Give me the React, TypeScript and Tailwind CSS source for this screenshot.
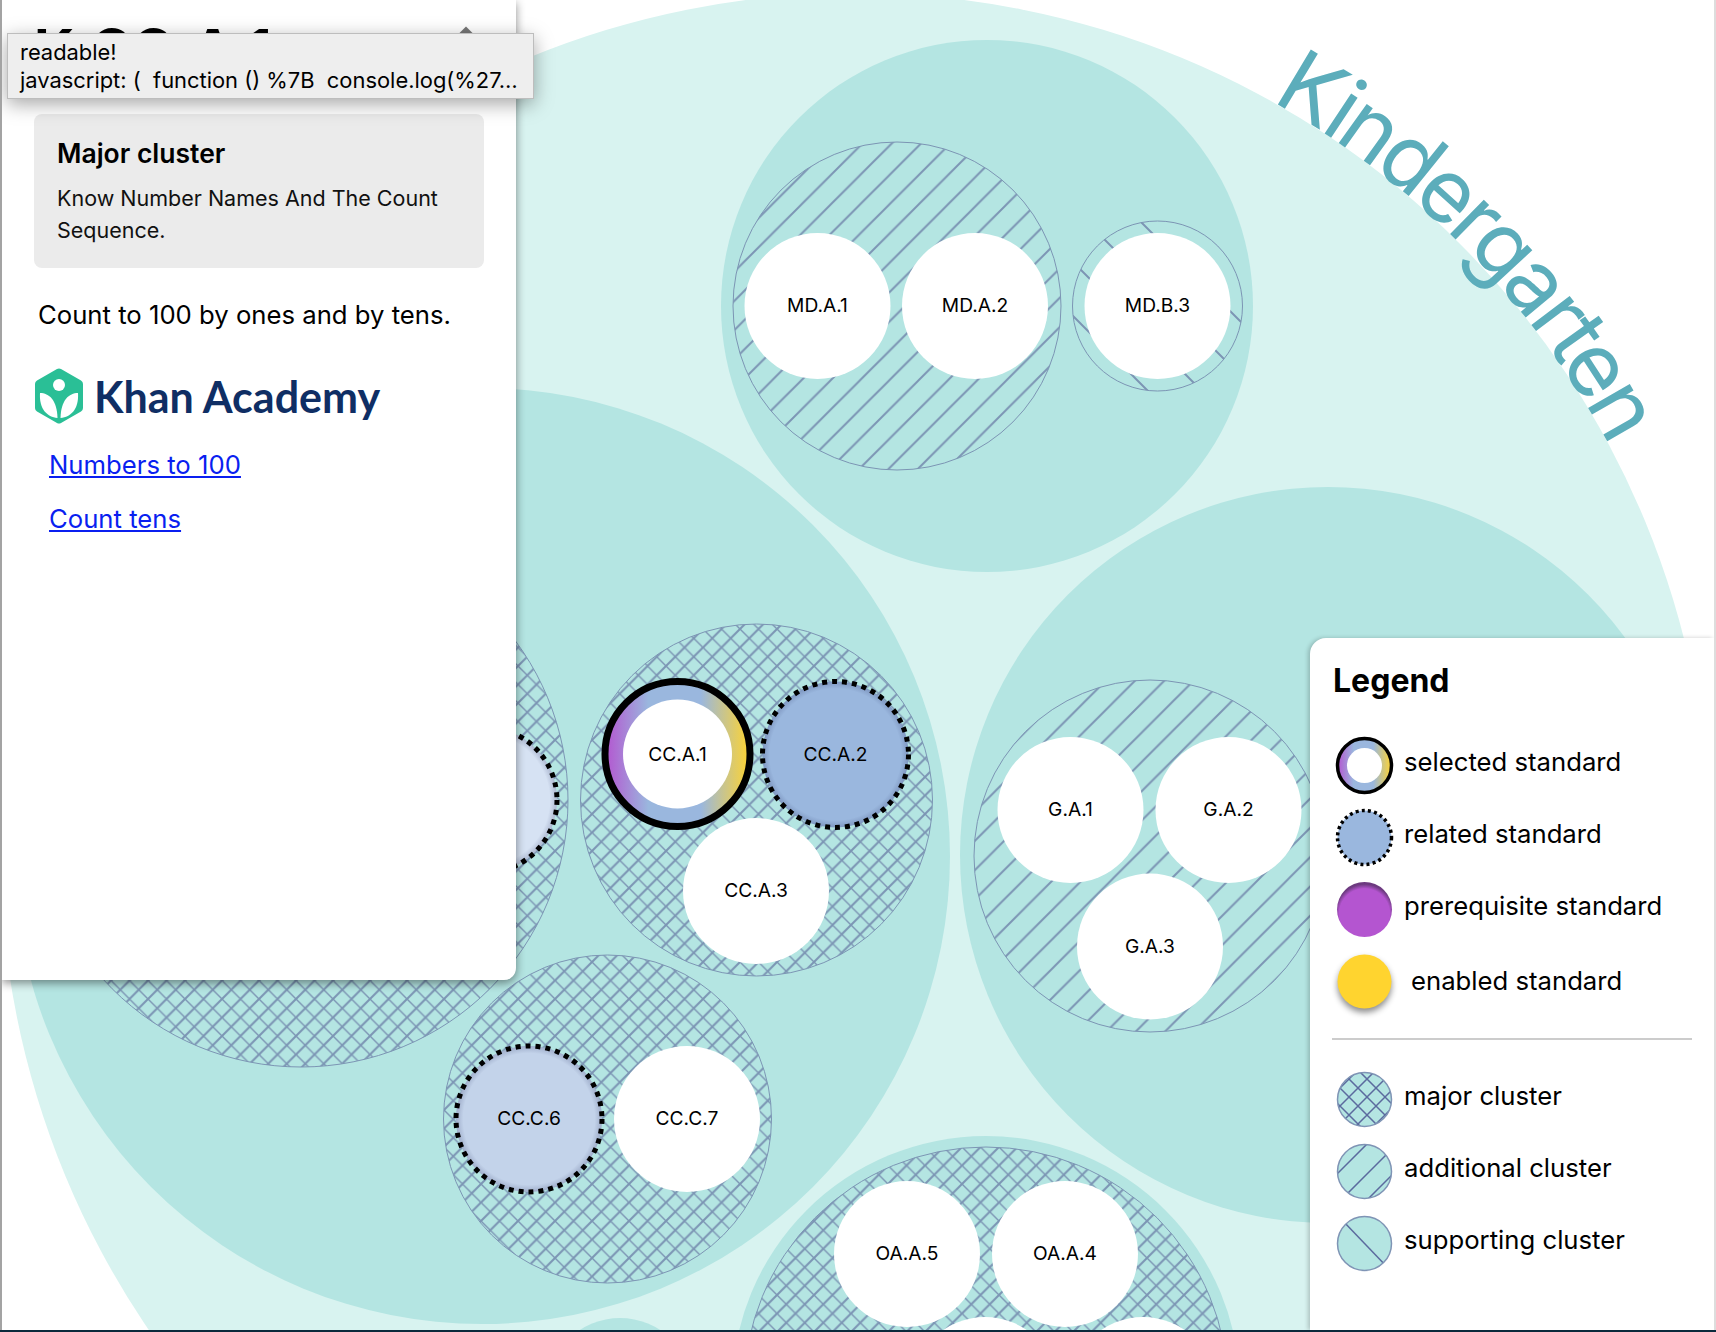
import React from 'react';

const LIGHT = '#d8f3f0';
const MEDIUM = '#b4e5e2';
const HATCH = '#7c95b4';
const PURPLE = '#b455d0';
const BLUE = '#9ab7de';
const YELLOW = '#ffd42f';

const slash = (p: number) => `M0 ${p}L${p} 0M-2 2L2 -2M${p - 2} ${p + 2}L${p + 2} ${p - 2}`;
const backslash = (p: number) => `M0 0L${p} ${p}M-2 ${p - 2}L2 ${p + 2}M${p - 2} -2L${p + 2} 2`;

const groups = [
  { cx: 987, cy: 306, r: 266 },
  { cx: 482, cy: 856, r: 468 },
  { cx: 1328, cy: 855, r: 368 },
  { cx: 986, cy: 1390, r: 254 },
  { cx: 620, cy: 1391, r: 73 },
];

const clusters = [
  { cx: 897, cy: 306, r: 164, fill: 'url(#add-md)' },
  { cx: 1157.5, cy: 306, r: 85, fill: 'url(#sup)' },
  { cx: 756.5, cy: 800, r: 176, fill: 'url(#major)' },
  { cx: 301, cy: 800, r: 267, fill: 'url(#major)' },
  { cx: 607.5, cy: 1119, r: 164, fill: 'url(#major)' },
  { cx: 1150, cy: 856, r: 176, fill: 'url(#add-g)' },
  { cx: 986, cy: 1389, r: 242, fill: 'url(#major)' },
];

const standards = [
  { id: 'MD.A.1', cx: 817.5, cy: 306 },
  { id: 'MD.A.2', cx: 975, cy: 306 },
  { id: 'MD.B.3', cx: 1157.5, cy: 306 },
  { id: 'CC.A.3', cx: 756, cy: 891 },
  { id: 'CC.C.7', cx: 687, cy: 1119 },
  { id: 'G.A.1', cx: 1070.500, cy: 810 },
  { id: 'G.A.2', cx: 1228.500, cy: 810 },
  { id: 'G.A.3', cx: 1150, cy: 946.500 },
  { id: 'OA.A.5', cx: 907, cy: 1254 },
  { id: 'OA.A.4', cx: 1065, cy: 1254 },
  { id: '', cx: 985, cy: 1390 },
  { id: '', cx: 1143, cy: 1390 },
];

const related = [
  { id: '', cx: 484, cy: 800, fill: '#d6e2f3' },
  { id: 'CC.A.2', cx: 835.5, cy: 754.5, fill: BLUE },
  { id: 'CC.C.6', cx: 529, cy: 1119, fill: '#c3d3ea' },
];

const Label = ({ x, y, children }: { x: number; y: number; children: React.ReactNode }) => (
  <text x={x} y={y - 1} textAnchor="middle" dominantBaseline="central" fill="#000" className="text-[19.2px]">
    {children}
  </text>
);

const Pack = () => (
  <svg width={1716} height={1332} className="absolute inset-0">
    <defs>
      <pattern id="add-md" width={29.3} height={29.3} patternUnits="userSpaceOnUse" patternTransform="translate(9.7 0)">
        <path d={slash(29.3)} stroke={HATCH} strokeWidth={2} />
      </pattern>
      <pattern id="add-g" width={29.3} height={29.3} patternUnits="userSpaceOnUse" patternTransform="translate(28.4 0)">
        <path d={slash(29.3)} stroke={HATCH} strokeWidth={2} />
      </pattern>
      <pattern id="sup" width={54} height={54} patternUnits="userSpaceOnUse" patternTransform="translate(1 0)">
        <path d={backslash(54)} stroke={HATCH} strokeWidth={2} />
      </pattern>
      <pattern id="major" width={18.5} height={18.5} patternUnits="userSpaceOnUse">
        <path d={backslash(18.5)} stroke={HATCH} strokeWidth={1.4} />
        <path d={slash(18.5)} stroke={HATCH} strokeWidth={2.1} />
      </pattern>
      <linearGradient id="selected">
        <stop offset="0%" stopColor={PURPLE} />
        <stop offset="30%" stopColor={BLUE} />
        <stop offset="66%" stopColor={BLUE} />
        <stop offset="100%" stopColor={YELLOW} />
      </linearGradient>
      <radialGradient id="inset">
        <stop offset="90%" stopColor="#1e285a" stopOpacity={0} />
        <stop offset="100%" stopColor="#1e285a" stopOpacity={0.22} />
      </radialGradient>
      <path id="edge" d="M1271 101 A855 855 0 0 1 1710 848" />
    </defs>

    <circle cx={855} cy={848} r={855} fill={LIGHT} />
    <text fill="#5cadbb" letterSpacing="-4.4" className="text-[88px] font-normal">
      <textPath href="#edge">Kindergarten</textPath>
    </text>

    {groups.map((g) => (
      <circle key={`${g.cx}-${g.cy}`} cx={g.cx} cy={g.cy} r={g.r} fill={MEDIUM} />
    ))}
    {clusters.map((c) => (
      <circle key={`${c.cx}-${c.cy}`} cx={c.cx} cy={c.cy} r={c.r} fill={c.fill} stroke={HATCH} strokeWidth={1} />
    ))}

    {standards.map((s) => (
      <g key={`${s.cx}-${s.cy}`}>
        <circle cx={s.cx} cy={s.cy} r={73} fill="#fff" />
        {s.id && <Label x={s.cx} y={s.cy}>{s.id}</Label>}
      </g>
    ))}

    {related.map((s) => (
      <g key={`${s.cx}-${s.cy}`}>
        <circle cx={s.cx} cy={s.cy} r={73} fill={s.fill} />
        <circle cx={s.cx} cy={s.cy} r={73} fill="url(#inset)" />
        <circle cx={s.cx} cy={s.cy} r={73} fill="none" stroke="#000" strokeWidth={5} strokeDasharray="5 5" />
        {s.id && <Label x={s.cx} y={s.cy}>{s.id}</Label>}
      </g>
    ))}

    <circle cx={677.5} cy={754} r={72.5} fill="url(#selected)" stroke="#000" strokeWidth={7} />
    <circle cx={677.5} cy={754} r={54.5} fill="#fff" />
    <Label x={677.5} y={755}>CC.A.1</Label>
  </svg>
);

const Swatch = ({ children, className }: { children: React.ReactNode; className?: string }) => (
  <svg width={55} height={55} viewBox="0 0 55 55" className={`shrink-0 overflow-visible ${className ?? ''}`}>
    {children}
  </svg>
);

const ClusterSwatch = ({ id, lines }: { id: string; lines: string }) => (
  <Swatch>
    <clipPath id={id}>
      <circle cx={27.5} cy={27.5} r={27} />
    </clipPath>
    <circle cx={27.5} cy={27.5} r={27} fill={MEDIUM} />
    <path d={lines} clipPath={`url(#${id})`} stroke="#5b6a9e" strokeWidth={1.5} fill="none" />
    <circle cx={27.5} cy={27.5} r={27} fill="none" stroke="#7f94b5" strokeWidth={1.5} />
  </Swatch>
);

const majorLines = [-54, -36, -18, 0, 18, 36, 54, 72, 90, 108]
  .map((n) => `M${n} -5L${n + 60} 55M${n} 55L${n + 60} -5`)
  .join('');

const legendRows = [
  {
    label: 'selected standard',
    swatch: (
      <Swatch>
        <linearGradient id="legend-selected">
          <stop offset="0%" stopColor={PURPLE} />
          <stop offset="30%" stopColor={BLUE} />
          <stop offset="66%" stopColor={BLUE} />
          <stop offset="100%" stopColor={YELLOW} />
        </linearGradient>
        <circle cx={27.5} cy={27.5} r={27} fill="url(#legend-selected)" stroke="#000" strokeWidth={3.5} />
        <circle cx={27.5} cy={27.5} r={17.5} fill="#fff" />
      </Swatch>
    ),
  },
  {
    label: 'related standard',
    swatch: (
      <Swatch>
        <circle cx={27.5} cy={27.5} r={27} fill={BLUE} stroke="#000" strokeWidth={3.5} strokeDasharray="3 3.2" />
      </Swatch>
    ),
  },
  {
    label: 'prerequisite standard',
    swatch: (
      <Swatch>
        <radialGradient id="legend-pre" cy="58%" r="54%">
          <stop offset="85%" stopColor={PURPLE} />
          <stop offset="100%" stopColor="#6d3a80" />
        </radialGradient>
        <circle cx={27.5} cy={27.5} r={27.5} fill="url(#legend-pre)" />
      </Swatch>
    ),
  },
  {
    label: 'enabled standard',
    indent: true,
    swatch: (
      <Swatch className="drop-shadow-[0_4px_3px_rgba(0,0,0,0.45)]">
        <circle cx={27.5} cy={27.5} r={27} fill={YELLOW} />
      </Swatch>
    ),
  },
];

const clusterRows = [
  { label: 'major cluster', swatch: <ClusterSwatch id="legend-major" lines={majorLines} /> },
  {
    label: 'additional cluster',
    swatch: <ClusterSwatch id="legend-add" lines="M-2 32L32 -2M2 58L62 -2M24 62L64 22" />,
  },
  { label: 'supporting cluster', swatch: <ClusterSwatch id="legend-sup" lines="M6 5L52 53" /> },
];

const Row = ({ label, swatch, indent }: { label: string; swatch: React.ReactNode; indent?: boolean }) => (
  <div className="flex h-[72px] items-center gap-3 pl-1">
    {swatch}
    <span className={`text-[25.7px] leading-none text-black ${indent ? 'ml-[7px]' : 'pb-[6px]'}`}>{label}</span>
  </div>
);

const Legend = () => (
  <div className="absolute left-[1310px] top-[638px] h-[692px] w-[404px] rounded-tl-2xl bg-white pl-[23px] shadow-[-2px_0_4px_rgba(0,0,0,0.2)]">
    <h2 className="mt-6 h-[38px] text-[32px] font-bold leading-[38px] text-black">Legend</h2>
    <div className="mt-[29px]">
      {legendRows.map((r) => (
        <Row key={r.label} {...r} />
      ))}
    </div>
    <div className="-ml-px mt-[21px] h-[2px] w-[360px] bg-[#cccccc]" />
    <div className="mt-[23px]">
      {clusterRows.map((r) => (
        <Row key={r.label} {...r} />
      ))}
    </div>
  </div>
);

const KhanLogo = () => (
  <div className="mt-[37px] flex h-[56px] items-center gap-[10px]">
    <svg width={50} height={56} viewBox="0 0 50 56">
      <path
        d="M23 1a4 4 0 0 1 4 0L47 12.500a4 4 0 0 1 2 3.500V40a4 4 0 0 1-2 3.500L27 55a4 4 0 0 1-4 0L3 43.500a4 4 0 0 1-2-3.500V16a4 4 0 0 1 2-3.500Z"
        fill="#2abf96"
      />
      <circle cx={25} cy={17} r={6} fill="#fff" />
      <path d="M6 25C15 25 23 32 23.500 50C13 49 5 41 6 25Z" fill="#fff" />
      <path d="M44 25C35 25 27 32 26.500 50C37 49 45 41 44 25Z" fill="#fff" />
    </svg>
    <span className="font-['Lato',sans-serif] text-[43px] font-bold leading-none text-[#0f2e64]">Khan Academy</span>
  </div>
);

const DetailPanel = () => (
  <div className="absolute left-[2px] top-0 h-[980px] w-[514px] rounded-br-xl bg-white px-8 pt-[22px] shadow-[0_3px_10px_rgba(0,0,0,0.45)]">
    <h1 className="h-14 text-[56px] font-bold leading-none text-black">K.CC.A.1</h1>
    <div className="absolute left-[458px] top-[29px] h-3 w-3 rotate-45 bg-[#777777]" />
    <div className="mt-9 h-[154px] w-[450px] rounded-lg bg-[#ebebeb] px-[23px] pt-5">
      <h3 className="text-[26.5px] font-semibold leading-[38px] text-black">Major cluster</h3>
      <p className="mt-[10px] text-[21.5px] leading-8 text-[#111111]">Know Number Names And The Count Sequence.</p>
    </div>
    <p className="ml-1 mt-[31px] text-[25.7px] leading-8 text-black">Count to 100 by ones and by tens.</p>
    <KhanLogo />
    <div className="ml-[15px] mt-[25px] flex flex-col gap-[22px] text-[25.7px] leading-8 text-[#0a1ff0] underline">
      <a href="#numbers">Numbers to 100</a>
      <a href="#tens">Count tens</a>
    </div>
  </div>
);

const BrowserTooltip = () => (
  <div className="absolute left-[7px] top-[33px] h-[66px] w-[527px] whitespace-pre border border-[#bdbdbd] bg-[#eeeeee] px-3 pt-[4px] text-[21.9px] leading-7 text-black shadow-[0_5px_18px_rgba(0,0,0,0.35)]">
    <div>readable!</div>
    <div>javascript: (  function () %7B  console.log(%27…</div>
  </div>
);

export default function App() {
  return (
    <div className="relative h-[1332px] w-[1716px] overflow-hidden bg-white font-['Inter',sans-serif]">
      <Pack />
      <Legend />
      <DetailPanel />
      <BrowserTooltip />
      <div className="absolute inset-y-0 left-0 w-[2px] bg-[#a3a3a3]" />
      <div className="absolute inset-y-0 right-0 w-[2px] bg-[#dddddd]" />
      <div className="absolute inset-x-0 bottom-0 h-[2px] bg-[#0b2a3c]" />
    </div>
  );
}
